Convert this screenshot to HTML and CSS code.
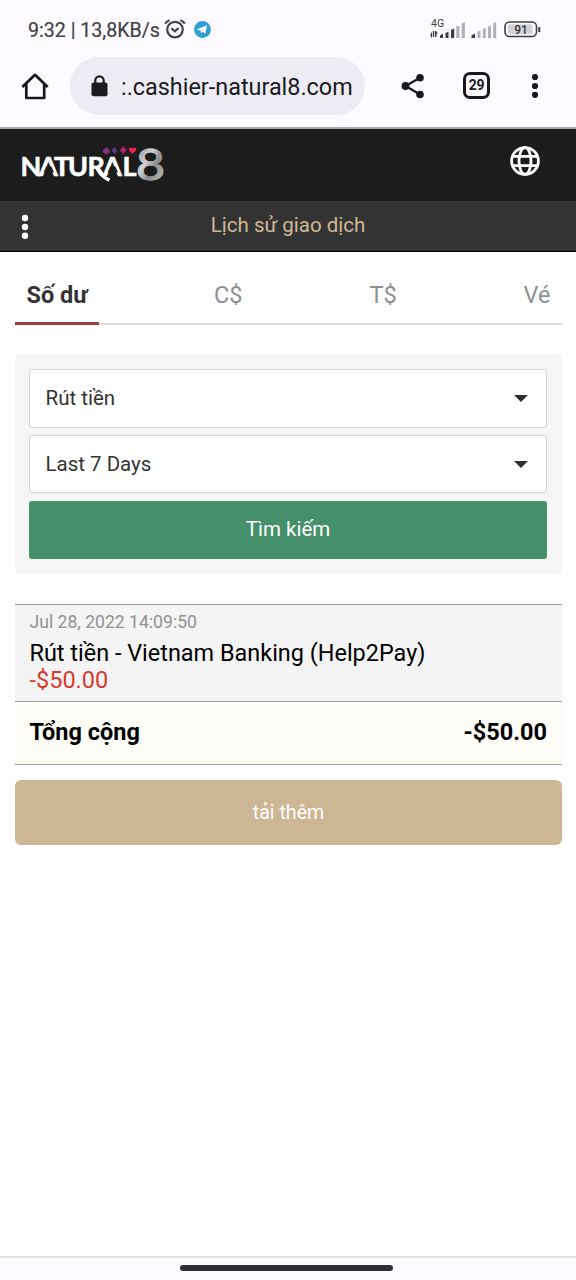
FILE: index.html
```html
<!DOCTYPE html>
<html lang="vi">
<head>
<meta charset="utf-8">
<title>Lịch sử giao dịch</title>
<link rel="stylesheet" href="styles.css">
</head>
<body>
<div class="chrome">
  <div class="status">
    <span class="clock">9:32 | 13,8KB/s</span>
    <svg class="alarm" width="22" height="20" viewBox="0 0 22 20" fill="none" stroke="#414146" stroke-width="2.200"><circle cx="11" cy="10.600" r="7.800"/><path d="M1.200 4.600Q2.800 2 5.600 1.200M16.400 1.200Q19.200 2 20.800 4.600M7.400 9.200l3.400 3.100 3.800-3.100"/></svg>
    <svg class="telegram" width="17" height="17" viewBox="0 0 17 17"><circle cx="8.500" cy="8.500" r="8.400" fill="#2f9fd6"/><path d="M2.600 8.400 12.900 4.300 11.400 12.800 8.500 10.800 6.900 12.300 6.600 9.800Z" fill="#fff"/><path d="m6.600 9.800 4.200-3.500-3.200 4.100" fill="#b9dff1"/></svg>
    <svg class="signals" width="112" height="26" viewBox="0 0 112 26">
      <text class="net" x="1" y="12">4G</text>
      <g fill="#3c3c42"><path d="M0 20.500 2.200 16v6.500H1v-2ZM3 16h1.200v5.800H3ZM5 16h1.200l1.600 3H6.500v3H5Z"/><path d="M10 23v-2.500l3-2V23ZM15.500 18l3-1.200V23h-3ZM21 15l3.200-1.500V23H21Z"/></g>
      <g fill="#3c3c42"><path d="M41.500 23v-2.500l3.500-2V23Z"/></g>
      <g fill="#b2b1b5"><path d="M26.300 11h3.200v12h-3.200ZM31.700 8.500l3.200-1.500v16h-3.200ZM47.500 16.500l3-1v7.500h-3ZM52.800 14l3-1v10h-3ZM58 11.500l3-1V23h-3ZM63.200 8.500l3-1.500V23h-3Z"/></g>
      <rect x="75" y="7" width="31.500" height="14.500" rx="4.500" fill="none" stroke="#3e3e43" stroke-width="1.600"/>
      <rect x="78" y="9.300" width="24.500" height="10" rx="2" fill="#d2d1d5"/><rect x="108.300" y="12" width="2" height="5" fill="#3e3e43"/>
      <text class="battery" x="91" y="18.800" text-anchor="middle">91</text>
    </svg>
  </div>
  <div class="toolbar">
    <svg class="home" width="28" height="28" viewBox="0 0 28 28" fill="none" stroke="#19191d" stroke-width="2.700" stroke-linejoin="round"><path d="M1.300 15 14 2.800l12.700 12.200M5.300 12v14h17.900V12"/></svg>
    <div class="address">
      <svg width="17" height="22" viewBox="0 0 17 22"><path d="M4.300 9V5.500a4.200 4.200 0 0 1 8.400 0V9" fill="none" stroke="#1b1b20" stroke-width="2.200"/><rect x="0.500" y="7.500" width="16" height="13.800" rx="2" fill="#1b1b20"/></svg>
      <span class="url">:.cashier-natural8.com</span>
    </div>
    <svg class="share" width="24" height="26" viewBox="0 0 24 26" fill="#19191d"><path d="M19 4.700 4.500 13 19 21.500" fill="none" stroke="#19191d" stroke-width="2.200"/><circle cx="19" cy="4.700" r="3.800"/><circle cx="4.500" cy="13" r="3.900"/><circle cx="19" cy="21.500" r="3.800"/></svg>
    <span class="count">29</span>
    <svg class="more" width="8" height="26" viewBox="0 0 8 26" fill="#19191d"><circle cx="4" cy="4" r="3.100"/><circle cx="4" cy="13" r="3.100"/><circle cx="4" cy="21.800" r="3.100"/></svg>
  </div>
</div>
<header class="brand">
  <svg width="150" height="50" viewBox="0 0 150 50" role="img">
    <defs><linearGradient id="silver" x1="0" y1="0" x2="1" y2="1"><stop offset="0" stop-color="#77777a"/><stop offset=".4" stop-color="#d2d2d5"/><stop offset=".6" stop-color="#8b8b8e"/><stop offset="1" stop-color="#d0d0d2"/></linearGradient></defs>
    <text class="wordmark" y="29.700" x="-0.500 18 33 47 66.500 82 101.500">NATURAL</text>
    <path d="M25.300 20.500h5l2.700 5.700H22.600ZM89.300 20.500h5l2.700 5.700H86.600Z" fill="#1c1c1c"/>
    <path d="M77 23.500q4 7.500 11.500 10.700" fill="none" stroke="#fff" stroke-width="3.500"/>
    <text class="eight" x="115" y="33.800" textLength="29" lengthAdjust="spacingAndGlyphs" fill="url(#silver)" stroke="url(#silver)" stroke-width="1.300">8</text>
    <path d="M85.300 1q3.500 3 3.500 4.500c0 1.500-1.500 1.700-2.700 1l1 1.500h-3.600l1-1.500c-1.200.7-2.700.5-2.700-1Q81.800 4 85.300 1Z" fill="#8b347f"/>
    <path d="m93.500 1 2.800 3.600-2.800 3.600-2.800-3.600Z" fill="#573a87"/>
    <path d="m102.300.3 3.500 4-3.500 4-3.500-4Z" fill="#b0216c"/>
    <path d="M111.500 8 108.100 4.500c-1-3 2.300-4 3.400-1.800 1.100-2.200 4.400-1.200 3.400 1.800Z" fill="#ee2150"/>
  </svg>
  <svg class="globe" width="32" height="32" viewBox="0 0 32 32" fill="none" stroke="#fff" stroke-width="2.800"><circle cx="16" cy="16" r="13.400"/><ellipse cx="16" cy="16" rx="6" ry="13.400"/><path d="M4 11.300h24M4 20.700h24"/></svg>
</header>
<div class="titlebar">
  <svg width="8" height="26" viewBox="0 0 8 26" fill="#fff"><circle cx="4" cy="4" r="3.200"/><circle cx="4" cy="13" r="3.200"/><circle cx="4" cy="21.700" r="3.200"/></svg>
  <h1>Lịch sử giao dịch</h1>
</div>
<main>
  <nav class="tabs">
    <a class="tab active">Số dư</a><a class="tab">C$</a><a class="tab">T$</a><a class="tab">Vé</a>
  </nav>
  <section class="filters">
    <div class="select"><span>Rút tiền</span><i class="caret"></i></div>
    <div class="select"><span>Last 7 Days</span><i class="caret"></i></div>
    <button class="search">Tìm kiếm</button>
  </section>
  <section class="history">
    <div class="entry">
      <span class="date">Jul 28, 2022 14:09:50</span>
      <span class="method">Rút tiền - Vietnam Banking (Help2Pay)</span>
      <span class="amount">-$50.00</span>
    </div>
    <div class="total"><span>Tổng cộng</span><span>-$50.00</span></div>
  </section>
  <button class="load">tải thêm</button>
</main>
<footer><div class="handle"></div></footer>
</body>
</html>
```
FILE: styles.css
```css
* { box-sizing: border-box; }
body {
  margin: 0;
  height: 1280px;
  display: flex;
  flex-direction: column;
  overflow: hidden;
  background: #fff;
  color: #000;
  font-family: Roboto, "Noto Sans", sans-serif;
}
svg { display: block; flex: none; overflow: visible; }
button { border: 0; padding: 0; font: inherit; color: #fff; }

.chrome { height: 129px; flex: none; background: #fdfbff; border-bottom: 2px solid #aaa8ac; }
.status { height: 56px; display: flex; align-items: center; padding: 4px 34px 0 28px; color: #414146; }
.clock { width: 133px; font-size: 19.6px; white-space: nowrap; -webkit-text-stroke: 0.2px #414146; }
.alarm { margin: -2px 0 0 3px; }
.telegram { margin: -2px 0 0 8px; }
.signals { margin: -4px 0 0 auto; }
.net { font-size: 10.5px; fill: #414146; }
.battery { font-size: 12px; font-weight: 500; fill: #35353a; }
.toolbar { height: 59px; display: flex; align-items: center; padding-left: 21px; }
.address {
  width: 295px;
  height: 58px;
  margin-left: 21px;
  padding-left: 21px;
  display: flex;
  align-items: center;
  border-radius: 29px;
  background: #edebf4;
}
.address svg { margin-top: 1px; }
.url { margin: 2px 0 0 13px; font-size: 23.4px; color: #1b1b20; white-space: nowrap; }
.share { margin-left: 36px; }
.count {
  width: 27px;
  height: 27px;
  margin-left: 38px;
  border: 3px solid #19191d;
  border-radius: 7px;
  font-size: 14px;
  font-weight: 700;
  line-height: 21px;
  letter-spacing: -0.4px;
  text-align: center;
  color: #19191d;
}
.more { margin-left: 41px; }

.brand { height: 72px; flex: none; display: flex; padding: 17px 35px 0 21px; justify-content: space-between; background: #1c1c1c; }
.globe { margin-top: -1px; }
.wordmark { font: 700 27px Lato, sans-serif; fill: #fff; stroke: #fff; stroke-width: 0.6px; }
.eight { font: 400 43px/1 Lato, sans-serif; }
.titlebar { height: 51px; flex: none; display: flex; align-items: center; padding: 0 21px; background: #333; border-bottom: 1px solid #000; }
.titlebar svg { margin-top: 1px; }
.titlebar h1 { flex: 1; margin: -3px 8px 0 0; text-align: center; font-size: 20.5px; font-weight: 400; color: #cfb994; }

main { flex: 1; padding: 0 14px 0 15px; display: flex; flex-direction: column; }
.tabs { height: 73px; display: flex; justify-content: space-between; box-shadow: inset 0 -2px #d9dbdc; font-size: 23.5px; color: #8e9194; }
.tab { height: 73px; padding: 0 11.5px 0 12.5px; line-height: 86px; }
.active { padding: 0 11px 0 11.5px; font-weight: 700; color: #333; border-bottom: 3px solid #a33a3c; }
.filters { height: 220px; margin-top: 29px; padding: 15px 15px 15px 14px; display: flex; flex-direction: column; gap: 7px; border-radius: 6px; background: #f6f6f6; }
.select { height: 59px; display: flex; align-items: center; justify-content: space-between; padding: 0 18px 0 15.5px; border: 1px solid #d3d3d3; border-radius: 3px; background: #fff; font-size: 20.5px; color: #333; }
.caret { margin-top: 0; border: 7.5px solid transparent; border-top-color: #2d2d2d; border-bottom: 0; }
.search { height: 58px; margin-top: 1px; padding-bottom: 2px; border-radius: 3px; background: #458f6a; font-size: 20.5px; }
.history { margin-top: 30px; font-size: 23.5px; }
.entry { height: 97px; padding: 7px 14.5px 0; display: flex; flex-direction: column; background: #f4f4f4; border-top: 1px solid #999; }
.date { height: 26px; line-height: 20px; font-size: 17.6px; color: #929292; }
.method { height: 28px; line-height: 30px; font-size: 23.45px; }
.amount { height: 28px; line-height: 29px; color: #d93a2f; }
.total { height: 64px; display: flex; justify-content: space-between; align-items: center; padding: 0 15px 2px 14.5px; border: solid #999; border-width: 1px 0; background: #fdfcf7; font-weight: 700; }
.load { height: 65px; margin-top: 15px; border-radius: 6px; background: #cdb693; font-size: 19.6px; }
footer { height: 24px; flex: none; display: flex; justify-content: center; padding: 7px 3px 0 0; background: #fdfbff; border-top: 2px solid #e3e2e6; }
.handle { width: 213px; height: 6px; border-radius: 3px; background: #302e33; }
```
